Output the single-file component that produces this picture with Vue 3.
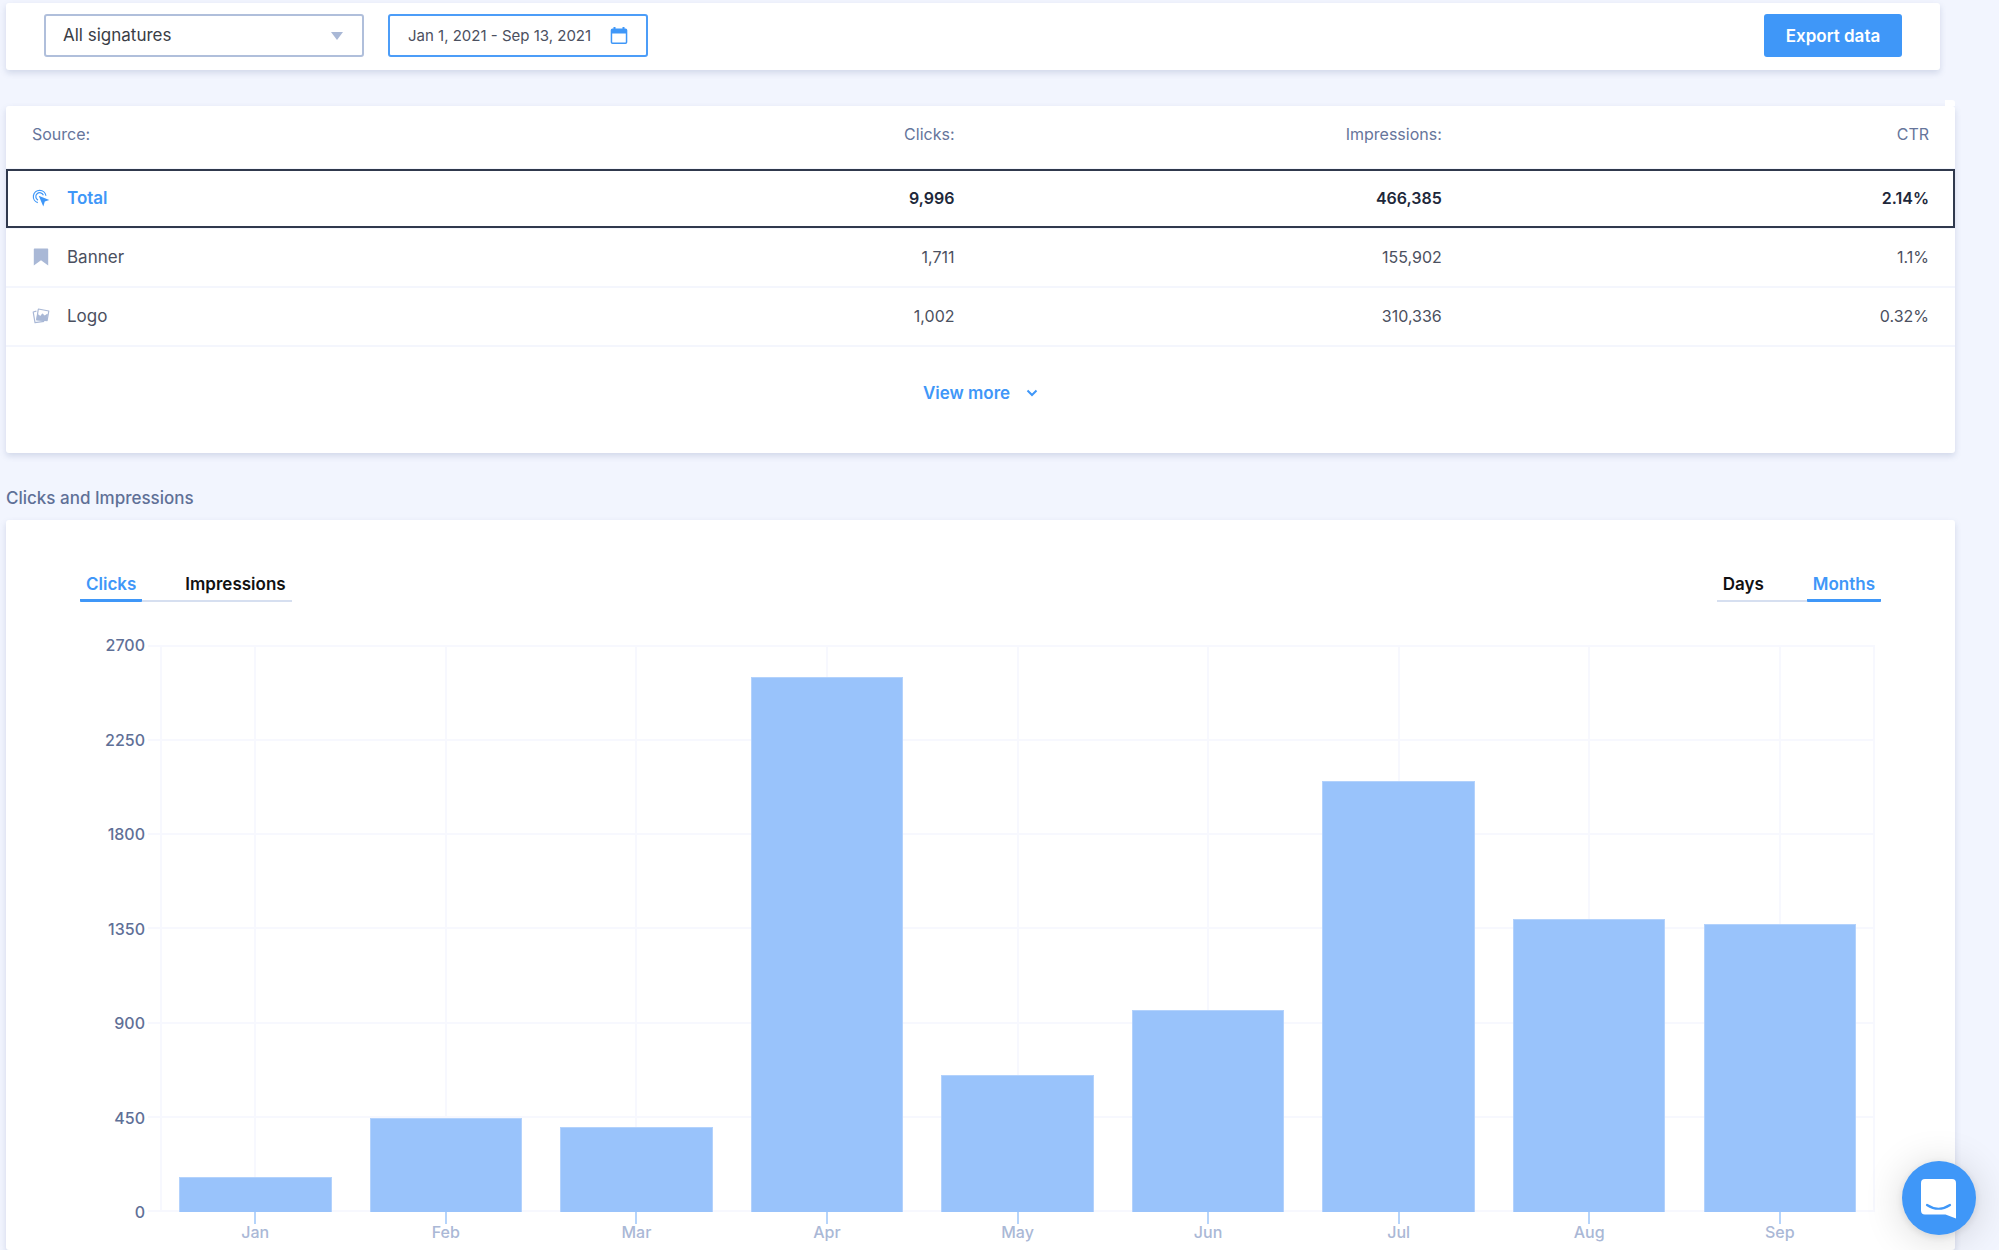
<script setup>
import { ref } from 'vue'

const signature = ref('all')
const metric = ref('Clicks')
const period = ref('Months')

const rows = [
  { name: 'Total', icon: 'click', clicks: '9,996', impressions: '466,385', ctr: '2.14%', total: true },
  { name: 'Banner', icon: 'bookmark', clicks: '1,711', impressions: '155,902', ctr: '1.1%' },
  { name: 'Logo', icon: 'images', clicks: '1,002', impressions: '310,336', ctr: '0.32%' },
]

const maxValue = 2700
const ticks = [2700, 2250, 1800, 1350, 900, 450, 0]
const months = [
  { label: 'Jan', value: 169 },
  { label: 'Feb', value: 446 },
  { label: 'Mar', value: 405 },
  { label: 'Apr', value: 2547 },
  { label: 'May', value: 653 },
  { label: 'Jun', value: 960 },
  { label: 'Jul', value: 2052 },
  { label: 'Aug', value: 1394 },
  { label: 'Sep', value: 1370 },
]
</script>

<template>
  <main class="page">
    <section class="card toolbar">
      <div class="select-wrap">
        <select v-model="signature" class="field select" aria-label="Signature">
          <option value="all">All signatures</option>
        </select>
        <svg class="caret" width="12" height="8" viewBox="0 0 12 8" aria-hidden="true">
          <path d="M0 0h12L6 8z" fill="#a9b8d6" />
        </svg>
      </div>
      <button type="button" class="field date">
        <span>Jan 1, 2021 - Sep 13, 2021</span>
        <svg width="18" height="18" viewBox="0 0 18 18" aria-hidden="true">
          <path d="M3.500 0h2v1.500h7V0h2v1.500h1q1.800 0 1.800 1.800v12q0 1.800-1.800 1.800h-13Q.7 17.100.7 15.300v-12Q.7 1.500 2.500 1.500h1zM2.200 6.500v8.500q0 .6.6.6h12.400q.6 0 .6-.6V6.500z" fill="#3f97f8" fill-rule="evenodd" />
        </svg>
      </button>
      <button type="button" class="export">Export data</button>
    </section>

    <section class="card sources">
      <table>
        <thead>
          <tr>
            <th scope="col">Source:</th>
            <th scope="col">Clicks:</th>
            <th scope="col">Impressions:</th>
            <th scope="col">CTR</th>
          </tr>
        </thead>
        <tbody>
          <tr v-for="row in rows" :key="row.name" :class="{ total: row.total }">
            <td>
              <div class="source">
                <svg v-if="row.icon === 'click'" width="18" height="18" viewBox="0 0 18 18" fill="none" stroke="#3f97f8" stroke-width="1.200" aria-hidden="true">
                  <path d="M5.800 13.600A6.300 6.300 0 1 1 13.900 6.800" />
                  <path d="M6 11.100A3.900 3.900 0 1 1 11.400 6.300" />
                  <path d="M6.700 6.700l10.600 4.200-4.500 1.700-1.500 4.800z" fill="#3f97f8" stroke="none" />
                </svg>
                <svg v-else-if="row.icon === 'bookmark'" width="18" height="18" viewBox="0 0 18 18" aria-hidden="true">
                  <path d="M2.500.5h13q.7 0 .7.700V17.500L9 12.200 1.800 17.500V1.200q0-.7.700-.7z" fill="#a9b8d6" />
                </svg>
                <svg v-else width="18" height="18" viewBox="0 0 18 18" fill="none" stroke="#a9b8d6" stroke-width="1.200" stroke-linejoin="round" aria-hidden="true">
                  <path d="M4.400 4.200L1.200 5l1.800 10.700 9.200-1.300M6 4l.4-2 10.400 2-1.700 9.600-10.300-1.200z" />
                  <path d="M4.800 13l.9-5.200 2.600 2 2.200-2.600 1.900 2.200 2.800-1.800-.9 5.800z" fill="#a9b8d6" />
                </svg>
                <span>{{ row.name }}</span>
              </div>
            </td>
            <td>{{ row.clicks }}</td>
            <td>{{ row.impressions }}</td>
            <td>{{ row.ctr }}</td>
          </tr>
        </tbody>
      </table>
      <button type="button" class="more">
        <span>View more</span>
        <svg width="12" height="8" viewBox="0 0 12 8" aria-hidden="true">
          <path d="M1.500 1.500L6 6l4.500-4.500" fill="none" stroke="#3f97f8" stroke-width="2" />
        </svg>
      </button>
    </section>

    <h2>Clicks and Impressions</h2>

    <section class="card chart-card">
      <div class="tabs-row">
        <div class="tabs">
          <button v-for="m in ['Clicks', 'Impressions']" :key="m" type="button" :class="{ active: metric === m }" @click="metric = m">{{ m }}</button>
        </div>
        <div class="tabs">
          <button v-for="p in ['Days', 'Months']" :key="p" type="button" :class="{ active: period === p }" @click="period = p">{{ p }}</button>
        </div>
      </div>

      <div class="chart">
        <div class="y-axis">
          <span v-for="t in ticks" :key="t">{{ t }}</span>
        </div>
        <div class="plot">
          <div class="lines">
            <i v-for="t in ticks" :key="t"></i>
          </div>
          <div v-for="m in months" :key="m.label" class="column">
            <div class="bar" :style="{ height: (m.value / maxValue) * 100 + '%' }"></div>
          </div>
        </div>
        <div class="x-axis">
          <span v-for="m in months" :key="m.label">{{ m.label }}</span>
        </div>
      </div>
    </section>

    <button type="button" class="chat" aria-label="Open chat">
      <svg width="36" height="40" viewBox="0 0 36 40" aria-hidden="true">
        <path d="M4 0h27q4 0 4 4v35.500L24.500 35.500H4q-4 0-4-4V4q0-4 4-4z" fill="#fff" />
        <path d="M6 26q11.500 7.500 23 0" fill="none" stroke="#3f97f8" stroke-width="2.200" stroke-linecap="round" />
      </svg>
    </button>
  </main>
</template>

<style>
body {
  background: #f2f5fe;
}
</style>

<style scoped>
.page {
  box-sizing: border-box;
  display: flex;
  flex-direction: column;
  min-height: 100vh;
  padding: 3px 44px 0 6px;
  font: 400 16px/20px Inter, "Open Sans", sans-serif;
  color: #4b5060;
}

button,
select {
  box-sizing: border-box;
  margin: 0;
  font: inherit;
  cursor: pointer;
}

.card {
  background: #fff;
  border-radius: 3px;
  box-shadow: 0 3px 6px rgba(80, 100, 150, 0.2);
}

.toolbar {
  display: flex;
  align-items: center;
  gap: 24px;
  height: 67px;
  margin-right: 15px;
  padding: 0 38px 2px;
  box-sizing: border-box;
}

.field {
  height: 43px;
  border-radius: 3px;
  background: #fff;
}

.select-wrap {
  display: flex;
  align-items: center;
  position: relative;
}

.select {
  width: 320px;
  padding: 0 17px 2px;
  border: 2px solid #b0bfdb;
  appearance: none;
  color: #3a3d45;
  font-size: 17px;
}

.caret {
  position: absolute;
  right: 21px;
  pointer-events: none;
}

.date {
  display: flex;
  align-items: center;
  justify-content: space-between;
  width: 260px;
  padding: 0 18px;
  border: 2px solid #4c9df8;
  color: #4b5060;
  font-size: 15px;
  white-space: nowrap;
}

.export {
  width: 138px;
  height: 43px;
  margin-left: auto;
  padding: 0;
  border: 0;
  border-radius: 3px;
  background: #3f97f8;
  color: #fff;
  font-size: 17px;
  font-weight: 600;
}

.sources {
  position: relative;
  display: flex;
  flex-direction: column;
  align-items: center;
  height: 347px;
  margin-top: 36px;
}

/* raised edge of the card beside the scroll area */
.sources::before {
  content: "";
  position: absolute;
  top: -6px;
  right: 0;
  width: 10px;
  height: 6px;
  border-radius: 0 3px 0 0;
  background: #fff;
}

table {
  width: 100%;
  table-layout: fixed;
  border-collapse: collapse;
}

th,
td {
  box-sizing: border-box;
  height: 59px;
  padding: 0 26px 2px;
  border-bottom: 2px solid #f4f6fd;
  text-align: right;
}

th {
  height: 63px;
  padding-bottom: 6px;
  color: #66759b;
  font-weight: 400;
}

th:first-child,
td:first-child {
  text-align: left;
}

.total td {
  color: #20273a;
  font-weight: 600;
}

.total {
  outline: 2px solid #30394d;
  outline-offset: -2px;
}

.total .source {
  color: #3f97f8;
}

.source {
  display: flex;
  align-items: center;
  gap: 17px;
  font-size: 17px;
}

.more {
  display: flex;
  align-items: center;
  gap: 16px;
  margin-top: 36px;
  padding: 0;
  border: 0;
  background: none;
  color: #3f97f8;
  font-size: 17px;
  font-weight: 600;
}

h2 {
  margin: 35px 0 12px;
  color: #5f7097;
  font-size: 17px;
  font-weight: 500;
  line-height: 20px;
}

.chart-card {
  flex: 1;
  padding: 53px 74px 0;
}

.tabs-row {
  display: flex;
  justify-content: space-between;
}

.tabs {
  display: flex;
  gap: 37px;
  box-shadow: inset 0 -2px #d6dff0;
}

.tabs button {
  height: 29px;
  padding: 0 6px 4px;
  border: 0;
  border-bottom: 3px solid transparent;
  background: none;
  color: #111;
  font-size: 17px;
  font-weight: 600;
}

.tabs .active {
  border-color: #3f97f8;
  border-radius: 1px;
  color: #3f97f8;
}

.chart {
  display: grid;
  grid-template-columns: 65px 1fr;
  grid-template-rows: 567px auto;
  column-gap: 15px;
  margin: 43px 6px 0 0;
}

.y-axis {
  display: flex;
  flex-direction: column;
  justify-content: space-between;
  margin: -10px 0;
  color: #5f7097;
  font-weight: 500;
  text-align: right;
}

.plot {
  position: relative;
  display: flex;
  background:
    linear-gradient(#f7f8fe, #f7f8fe) left / 2px 100% no-repeat,
    linear-gradient(#f7f8fe, #f7f8fe) right / 2px 100% no-repeat;
}

.lines {
  position: absolute;
  inset: 0 0 0 -12px;
  display: flex;
  flex-direction: column;
  justify-content: space-between;
}

.lines i {
  height: 2px;
  background: #f7f8fe;
}

.column {
  position: relative;
  flex: 1;
  display: flex;
  align-items: flex-end;
  justify-content: center;
  background: linear-gradient(#f7f8fe, #f7f8fe) center / 2px 100% no-repeat;
}

.bar {
  box-sizing: border-box;
  width: 80%;
  border: 1px solid #b3d2fc;
  border-bottom: 0;
  background: #99c3fb;
}

.x-axis {
  grid-column: 2;
  display: flex;
  color: #aab8d6;
  font-weight: 500;
}

.x-axis span {
  flex: 1;
  padding-top: 10px;
  background: linear-gradient(#b5d4fb, #b5d4fb) top / 2px 12px no-repeat;
  text-align: center;
}

.chat {
  position: fixed;
  right: 23px;
  bottom: 15px;
  display: flex;
  align-items: center;
  justify-content: center;
  width: 74px;
  height: 74px;
  padding: 2px 0 0;
  border: 0;
  border-radius: 50%;
  background: #3f97f8;
  box-shadow: 0 2px 8px rgba(0, 0, 0, 0.1), 0 4px 40px rgba(0, 0, 0, 0.16);
}
</style>
